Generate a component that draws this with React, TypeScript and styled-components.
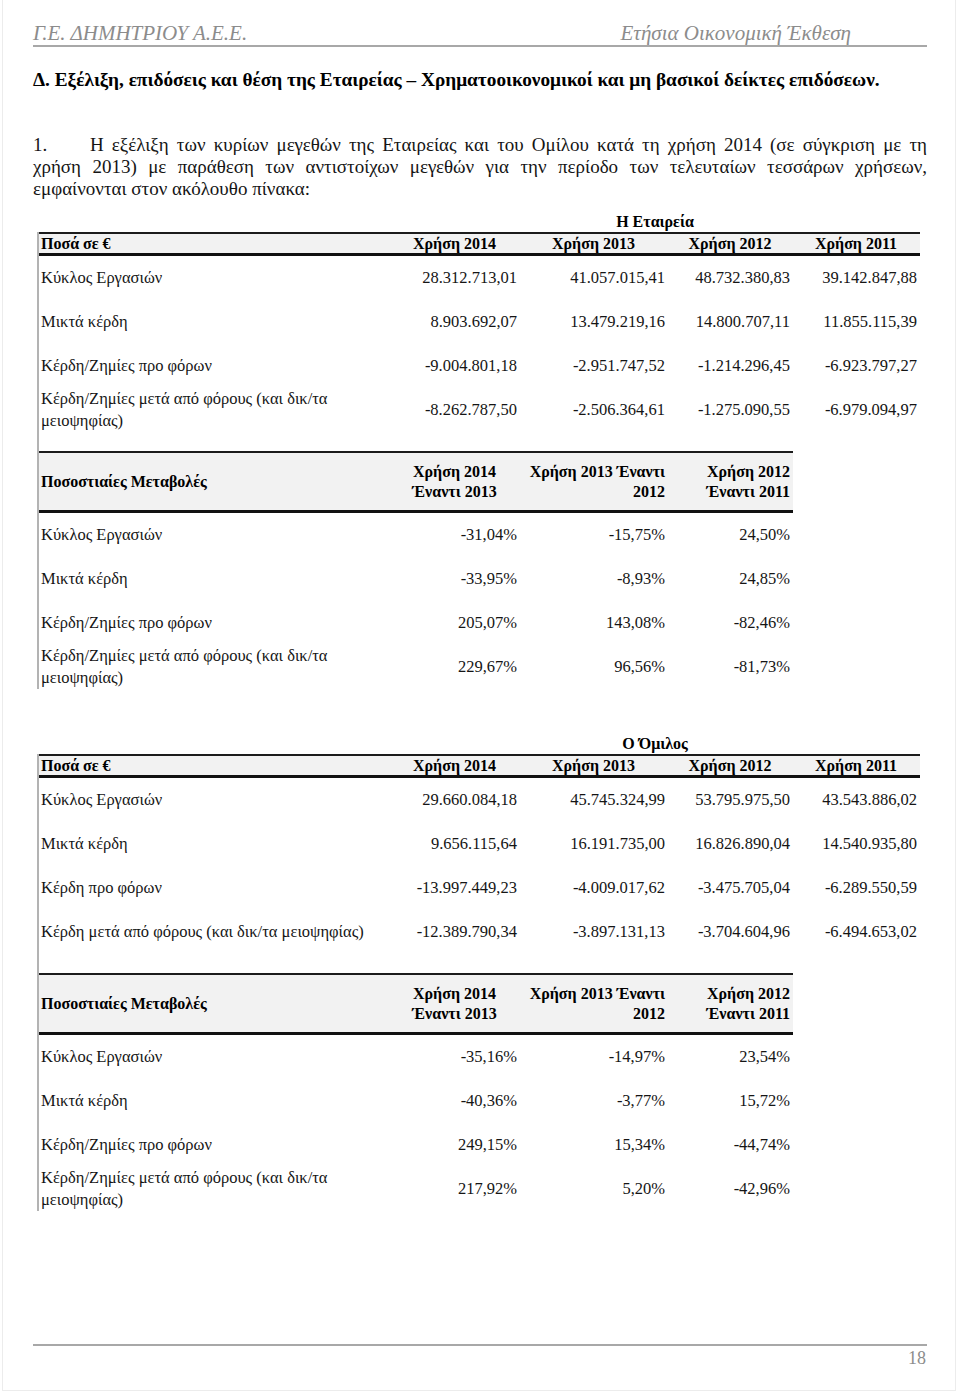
import React from "react";
import styled, { createGlobalStyle } from "styled-components";

const GlobalStyle = createGlobalStyle`
  html, body { margin: 0; padding: 0; background: #fff; }
  body { font-family: "Liberation Serif", "Times New Roman", serif; color: #151515; }
`;

const Page = styled.div`
  box-sizing: border-box;
  width: 954px;
  height: 1391px;
  margin-left: 2px;
  border: 1px solid #ececec;
  border-top: none;
  padding: 0 28px 0 30px;
  display: flex;
  flex-direction: column;
`;

const RunningHead = styled.header`
  display: flex;
  justify-content: space-between;
  padding: 21px 76px 0 0;
  border-bottom: 2px solid #a8a8a8;
  font-style: italic;
  font-size: 21px;
  line-height: 24px;
  color: #8c8c8c;
`;

const SectionTitle = styled.h1`
  margin: 22px 0 0;
  font-size: 19.3px;
  line-height: 22px;
  font-weight: bold;
  color: #000;
`;

const Para = styled.div`
  margin-top: 43px;
  font-size: 19px;
  line-height: 22px;
`;

const Line = styled.span<{ $justify?: boolean }>`
  display: block;
  text-align: justify;
  text-align-last: ${(p) => (p.$justify ? "justify" : "left")};
`;

const Num = styled.span`
  display: inline-block;
  width: 57px;
  text-align-last: left;
`;

const Group = styled.section<{ $top: number }>`
  margin-top: ${(p) => p.$top}px;
`;

const GroupTitle = styled.div`
  box-sizing: content-box;
  padding-left: 357px;
  width: 530px;
  text-align: center;
  font-weight: bold;
  font-size: 16px;
  line-height: 20px;
  color: #000;
`;

const Bordered = styled.div`
  margin-left: 4px;
  border-left: 2px solid #b3b3b3;
  display: flex;
  flex-direction: column;
  align-items: flex-start;
  gap: 19px;
  width: fit-content;
`;

const Table = styled.div`
  display: flex;
  flex-direction: column;
`;

const Row = styled.div<{ $cols: string }>`
  display: grid;
  grid-template-columns: ${(p) => p.$cols};
  align-items: center;
`;

const HeadRow = styled(Row)<{ $h: number }>`
  box-sizing: border-box;
  height: ${(p) => p.$h}px;
  background: #f2f2f2;
  border-top: 2px solid #1c1c1c;
  border-bottom: 3px solid #111;
  font-weight: bold;
  font-size: 16px;
  line-height: 20px;
  color: #000;
`;

const BodyRow = styled(Row)`
  height: 44px;
  font-size: 16.5px;
  line-height: 22px;
`;

const Cell = styled.div<{ $align?: "left" | "right" | "center" }>`
  padding: 0 3px 0 2px;
  text-align: ${(p) => p.$align || "right"};
  white-space: pre-line;
`;

const Footer = styled.footer`
  margin-top: auto;
  border-top: 2px solid #a8a8a8;
  padding: 2px 1px 22px 0;
  text-align: right;
  font-size: 18px;
  line-height: 20px;
  color: #8c8c8c;
`;

const COLS5 = "351px 130px 148px 125px 127px";
const COLS4 = "351px 130px 148px 125px";

type Data = { label: string; values: string[] };

const companyAbs: Data[] = [
  { label: "Κύκλος Εργασιών", values: ["28.312.713,01", "41.057.015,41", "48.732.380,83", "39.142.847,88"] },
  { label: "Μικτά κέρδη", values: ["8.903.692,07", "13.479.219,16", "14.800.707,11", "11.855.115,39"] },
  { label: "Κέρδη/Ζημίες προ φόρων", values: ["-9.004.801,18", "-2.951.747,52", "-1.214.296,45", "-6.923.797,27"] },
  { label: "Κέρδη/Ζημίες μετά από φόρους (και δικ/τα\nμειοψηφίας)", values: ["-8.262.787,50", "-2.506.364,61", "-1.275.090,55", "-6.979.094,97"] },
];

const companyPct: Data[] = [
  { label: "Κύκλος Εργασιών", values: ["-31,04%", "-15,75%", "24,50%"] },
  { label: "Μικτά κέρδη", values: ["-33,95%", "-8,93%", "24,85%"] },
  { label: "Κέρδη/Ζημίες προ φόρων", values: ["205,07%", "143,08%", "-82,46%"] },
  { label: "Κέρδη/Ζημίες μετά από φόρους (και δικ/τα\nμειοψηφίας)", values: ["229,67%", "96,56%", "-81,73%"] },
];

const groupAbs: Data[] = [
  { label: "Κύκλος Εργασιών", values: ["29.660.084,18", "45.745.324,99", "53.795.975,50", "43.543.886,02"] },
  { label: "Μικτά κέρδη", values: ["9.656.115,64", "16.191.735,00", "16.826.890,04", "14.540.935,80"] },
  { label: "Κέρδη προ φόρων", values: ["-13.997.449,23", "-4.009.017,62", "-3.475.705,04", "-6.289.550,59"] },
  { label: "Κέρδη μετά από φόρους (και δικ/τα μειοψηφίας)", values: ["-12.389.790,34", "-3.897.131,13", "-3.704.604,96", "-6.494.653,02"] },
];

const groupPct: Data[] = [
  { label: "Κύκλος Εργασιών", values: ["-35,16%", "-14,97%", "23,54%"] },
  { label: "Μικτά κέρδη", values: ["-40,36%", "-3,77%", "15,72%"] },
  { label: "Κέρδη/Ζημίες προ φόρων", values: ["249,15%", "15,34%", "-44,74%"] },
  { label: "Κέρδη/Ζημίες μετά από φόρους (και δικ/τα\nμειοψηφίας)", values: ["217,92%", "5,20%", "-42,96%"] },
];

const AbsTable = ({ rows }: { rows: Data[] }) => (
  <Table>
    <HeadRow $cols={COLS5} $h={24}>
      <Cell $align="left">Ποσά σε €</Cell>
      <Cell $align="center">Χρήση 2014</Cell>
      <Cell $align="center">Χρήση 2013</Cell>
      <Cell $align="center">Χρήση 2012</Cell>
      <Cell $align="center">Χρήση 2011</Cell>
    </HeadRow>
    {rows.map((r) => (
      <BodyRow $cols={COLS5} key={r.label}>
        <Cell $align="left">{r.label}</Cell>
        {r.values.map((v, i) => (
          <Cell key={i}>{v}</Cell>
        ))}
      </BodyRow>
    ))}
  </Table>
);

const PctTable = ({ rows }: { rows: Data[] }) => (
  <Table>
    <HeadRow $cols={COLS4} $h={62}>
      <Cell $align="left">Ποσοστιαίες Μεταβολές</Cell>
      <Cell $align="center">{"Χρήση 2014\nΈναντι 2013"}</Cell>
      <Cell>{"Χρήση 2013 Έναντι\n2012"}</Cell>
      <Cell>{"Χρήση 2012\nΈναντι 2011"}</Cell>
    </HeadRow>
    {rows.map((r) => (
      <BodyRow $cols={COLS4} key={r.label}>
        <Cell $align="left">{r.label}</Cell>
        {r.values.map((v, i) => (
          <Cell key={i}>{v}</Cell>
        ))}
      </BodyRow>
    ))}
  </Table>
);

export default function App() {
  return (
    <>
      <GlobalStyle />
      <Page>
        <RunningHead>
          <span>Γ.Ε. ΔΗΜΗΤΡΙΟΥ Α.Ε.Ε.</span>
          <span>Ετήσια Οικονομική Έκθεση</span>
        </RunningHead>
        <SectionTitle>
          Δ. Εξέλιξη, επιδόσεις και θέση της Εταιρείας – Χρηματοοικονομικοί και μη βασικοί δείκτες επιδόσεων.
        </SectionTitle>
        <Para>
          <Line $justify>
            <Num>1.</Num>Η εξέλιξη των κυρίων μεγεθών της Εταιρείας και του Ομίλου κατά τη χρήση 2014 (σε σύγκριση με τη
          </Line>
          <Line $justify>
            χρήση 2013) με παράθεση των αντιστοίχων μεγεθών για την περίοδο των τελευταίων τεσσάρων χρήσεων,
          </Line>
          <Line>εμφαίνονται στον ακόλουθο πίνακα:</Line>
        </Para>
        <Group $top={12}>
          <GroupTitle>Η Εταιρεία</GroupTitle>
          <Bordered>
            <AbsTable rows={companyAbs} />
            <PctTable rows={companyPct} />
          </Bordered>
        </Group>
        <Group $top={45}>
          <GroupTitle>Ο Όμιλος</GroupTitle>
          <Bordered>
            <AbsTable rows={groupAbs} />
            <PctTable rows={groupPct} />
          </Bordered>
        </Group>
        <Footer>18</Footer>
      </Page>
    </>
  );
}
